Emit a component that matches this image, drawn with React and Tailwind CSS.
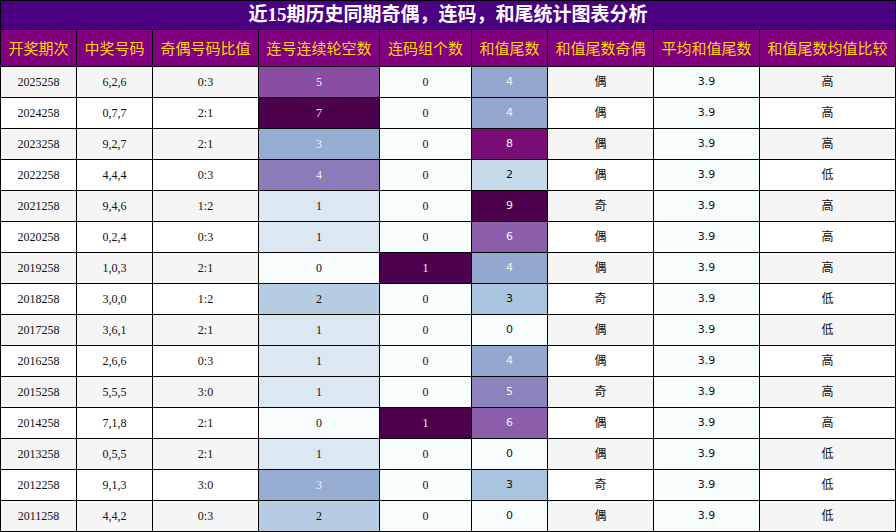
import React from "react";

const rows = [
    { period: "2025258", nums: "6,2,6", ratio: "0:3", gap: 5, pairs: 0, tail: 4, parity: "偶", level: "高" },
    { period: "2024258", nums: "0,7,7", ratio: "2:1", gap: 7, pairs: 0, tail: 4, parity: "偶", level: "高" },
    { period: "2023258", nums: "9,2,7", ratio: "2:1", gap: 3, pairs: 0, tail: 8, parity: "偶", level: "高" },
    { period: "2022258", nums: "4,4,4", ratio: "0:3", gap: 4, pairs: 0, tail: 2, parity: "偶", level: "低" },
    { period: "2021258", nums: "9,4,6", ratio: "1:2", gap: 1, pairs: 0, tail: 9, parity: "奇", level: "高" },
    { period: "2020258", nums: "0,2,4", ratio: "0:3", gap: 1, pairs: 0, tail: 6, parity: "偶", level: "高" },
    { period: "2019258", nums: "1,0,3", ratio: "2:1", gap: 0, pairs: 1, tail: 4, parity: "偶", level: "高" },
    { period: "2018258", nums: "3,0,0", ratio: "1:2", gap: 2, pairs: 0, tail: 3, parity: "奇", level: "低" },
    { period: "2017258", nums: "3,6,1", ratio: "2:1", gap: 1, pairs: 0, tail: 0, parity: "偶", level: "低" },
    { period: "2016258", nums: "2,6,6", ratio: "0:3", gap: 1, pairs: 0, tail: 4, parity: "偶", level: "高" },
    { period: "2015258", nums: "5,5,5", ratio: "3:0", gap: 1, pairs: 0, tail: 5, parity: "奇", level: "高" },
    { period: "2014258", nums: "7,1,8", ratio: "2:1", gap: 0, pairs: 1, tail: 6, parity: "偶", level: "高" },
    { period: "2013258", nums: "0,5,5", ratio: "2:1", gap: 1, pairs: 0, tail: 0, parity: "偶", level: "低" },
    { period: "2012258", nums: "9,1,3", ratio: "3:0", gap: 3, pairs: 0, tail: 3, parity: "奇", level: "低" },
    { period: "2011258", nums: "4,4,2", ratio: "0:3", gap: 2, pairs: 0, tail: 0, parity: "偶", level: "低" },
];

const headers = [
    "开奖期次",
    "中奖号码",
    "奇偶号码比值",
    "连号连续轮空数",
    "连码组个数",
    "和值尾数",
    "和值尾数奇偶",
    "平均和值尾数",
    "和值尾数均值比较",
];

// BuPu colour map stops
const stops = [
    [247, 252, 253],
    [224, 236, 244],
    [191, 211, 230],
    [158, 188, 218],
    [140, 150, 198],
    [140, 107, 177],
    [136, 65, 157],
    [129, 15, 124],
    [77, 0, 75],
];

const heat = (v, min, max) => {
    const t = max === min ? 0 : (v - min) / (max - min);
    const pos = t * (stops.length - 1);
    const i = Math.min(Math.floor(pos), stops.length - 2);
    const f = pos - i;
    const rgb = stops[i].map((c, k) => Math.round(c + (stops[i + 1][k] - c) * f));
    const lum = rgb
        .map((c) => {
            const s = c / 255;
            return s <= 0.03928 ? s / 12.92 : Math.pow((s + 0.055) / 1.055, 2.4);
        })
        .reduce((acc, c, k) => acc + c * [0.2126, 0.7152, 0.0722][k], 0);
    return {
        backgroundColor: `rgb(${rgb.join(",")})`,
        color: lum < 0.408 ? "#f1f1f1" : "#111111",
    };
};

const range = (key) => {
    const vals = rows.map((r) => r[key]);
    return [Math.min(...vals), Math.max(...vals)];
};

const serif = "font-['Liberation_Serif','Noto_Sans_CJK_SC',serif] text-[12px]";
const sans = "font-['DejaVu_Sans','Noto_Sans_CJK_SC',sans-serif] text-[11px]";

const App = () => {
    const gapRange = range("gap");
    const pairRange = range("pairs");
    const tailRange = range("tail");
    const avgStyle = heat(3.9, 3.9, 3.9);

    return (
        <div className="w-[896px] h-[532px] bg-white">
            <div className="grid grid-cols-[75px_75px_105px_120px_91px_75px_105px_105px_135px] grid-rows-[28px_36px] auto-rows-[30px] gap-px p-px bg-black text-[#111]">
                {/* Title */}
                <div className="col-span-9 bg-[#4b0082] flex items-center justify-center text-white font-bold text-[19px] font-['Liberation_Serif','Noto_Sans_CJK_SC',serif]">
                    近15期历史同期奇偶，连码，和尾统计图表分析
                </div>

                {/* Header */}
                {headers.map((h) => (
                    <div
                        key={h}
                        className="bg-[#800080] text-[#ffd700] text-[15px] flex items-center justify-center whitespace-nowrap font-['Noto_Sans_CJK_SC',sans-serif]"
                    >
                        {h}
                    </div>
                ))}

                {/* Rows */}
                {rows.map((r, i) => {
                    const bg = i % 2 === 0 ? "bg-[#f5f5f5]" : "bg-white";
                    const cell = "flex items-center justify-center";
                    return (
                        <React.Fragment key={r.period}>
                            <div className={`${cell} ${bg} ${serif}`}>{r.period}</div>
                            <div className={`${cell} ${bg} ${serif}`}>{r.nums}</div>
                            <div className={`${cell} ${bg} ${serif}`}>{r.ratio}</div>
                            <div className={`${cell} ${serif}`} style={heat(r.gap, ...gapRange)}>
                                {r.gap}
                            </div>
                            <div className={`${cell} ${serif}`} style={heat(r.pairs, ...pairRange)}>
                                {r.pairs}
                            </div>
                            <div className={`${cell} ${sans}`} style={heat(r.tail, ...tailRange)}>
                                {r.tail}
                            </div>
                            <div className={`${cell} ${bg} ${sans} text-[12px]`}>{r.parity}</div>
                            <div className={`${cell} ${sans}`} style={avgStyle}>
                                3.9
                            </div>
                            <div className={`${cell} ${bg} ${sans} text-[12px]`}>{r.level}</div>
                        </React.Fragment>
                    );
                })}
            </div>
        </div>
    );
};

export default App;
